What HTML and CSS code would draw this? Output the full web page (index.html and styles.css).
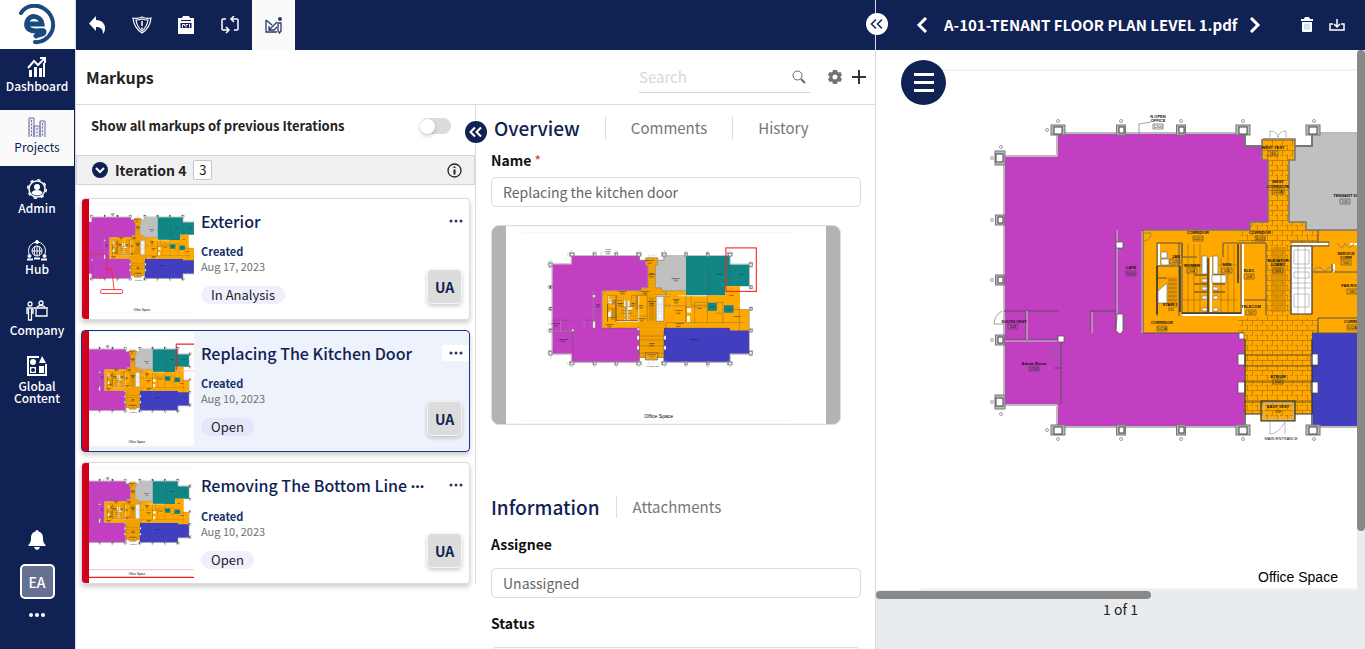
FILE: index.html
```html
<!DOCTYPE html>
<html lang="en">
<head>
<meta charset="utf-8">
<title>Markups</title>
<link rel="stylesheet" href="styles.css">
</head>
<body>
<svg class="defs" width="0" height="0" aria-hidden="true">
  <defs>
    <pattern id="tile" width="10" height="10" patternUnits="userSpaceOnUse">
      <path d="M0 .5H10M2.500.5V5M7.500 5V10" fill="none" stroke="#7a5000" stroke-width=".7" opacity=".6"/><path d="M0 5.500H10" fill="none" stroke="#7a5000" stroke-width=".6" stroke-dasharray="3 2" opacity=".6"/>
    </pattern>
    <g id="col"><rect x="-7" y="-5" width="14" height="10" fill="#bbb" stroke="#777"/><rect x="-4" y="-3" width="8" height="7" fill="#fff" stroke="#444"/></g>
    <g id="cols"><rect x="-4.500" y="-5" width="9" height="10" fill="#bbb" stroke="#777"/><rect x="-2" y="-3" width="5" height="6" fill="#fff" stroke="#444"/></g>
    <g id="dots" fill="none" stroke="#888" stroke-width=".8"><circle cx="1058" cy="121" r="1.500"/><circle cx="1121" cy="121" r="1.500"/><circle cx="1181" cy="121" r="1.500"/><circle cx="1243" cy="121" r="1.500"/><circle cx="1314" cy="121" r="1.500"/><circle cx="1373" cy="121" r="1.500"/><circle cx="1433" cy="121" r="1.500"/><circle cx="1494" cy="121" r="1.500"/></g>
    <g id="plan">
      <rect x="877" y="52" width="882" height="545" fill="#fff"/>
      <path d="M921 70H1663M921 589H1663" stroke="#e4e4e4" stroke-width="1"/>
      <path fill="#c13fc0" d="M1058 134H1245V146H1262V160H1268V222H1250V230H1143V333H1244V427H1058V404H1005V157H1058Z"/>
      <path fill="#c0c0c0" d="M1312 134H1373V230H1306V222H1289V160H1295V146H1312Z"/>
      <path fill="#108785" d="M1373 134H1494V158H1547V218H1481V243H1373Z"/>
      <path fill="#413fc0" d="M1312 333H1547V404H1494V427H1312Z"/>
      <path fill="#ffa800" d="M1262 139H1295V160H1289V222H1306V230H1373V243H1481V218H1522V282H1547V340H1494V333H1312V414H1295V421H1261V414H1244V333H1143V230H1250V222H1268V160H1262Z"/>
      <path fill="url(#tile)" d="M1262 139H1295V160H1289V222H1306V230H1318V243H1290V318H1318V333H1312V414H1295V421H1261V414H1244V333H1238V318H1266V243H1238V230H1250V222H1268V160H1262Z"/>
      <path fill="#108785" d="M1433 263H1458V285H1433ZM1478 270H1504V291H1478Z"/>
      <g fill="none" stroke="#777" stroke-width="2">
        <path d="M1004 157V404M1004 156H1057V133H1245V146H1262M1295 146H1312V133H1495V157H1548V218M1004 405H1057V427H1245V414M1312 414V427H1495V405H1548V283"/>
        <path stroke-width="1.500" d="M1263 139H1295V160H1289V222H1306V230H1373M1262 139V160H1268V222H1250V230H1143"/>
      </g>
      <path fill="none" stroke="#fff" stroke-width="1" d="M1004 157V404M1004 156H1057V133H1245M1312 133H1495V157H1548V218M1004 405H1057V427H1245M1312 427H1495V405H1548V283"/>
      <g fill="none" stroke="#555" stroke-width="1">
        <path d="M1116 230V330M1143 230V333H1244M1312 333H1494M1004 311H1059M1091 333V311H1116M1004 340H1062M1061 340V404M1026 311V340M1054 368H1062"/>
        <path stroke="#ccc" d="M1117 230V330M1142 231V333M1092 333V312M1027 311V340M1004 341H1062"/>
      </g>
      <path fill="#fff" stroke="#555" stroke-width=".8" d="M1117 314H1123V331L1120 334L1116 331ZM1116 242H1123V248H1116ZM1058 336H1064V342H1058Z"/>
      <g stroke="#555" fill="none" stroke-width="1">
        <path d="M1157 243V316M1157 243H1182V257H1197M1223 257V243H1241V314H1182V243M1157 266H1179V316M1157 278H1167M1179 243V266M1266 243V315M1242 243H1266M1242 300H1266"/>
        <path stroke="#333" stroke-width="1.500" d="M1180 266V312M1157 266V314M1208 258V313M1182 313H1241M1238 244V283"/>
        <path stroke="#fff" stroke-width="2" d="M1182 315H1243V244M1211 257V312M1159 244V265"/>
        <path stroke="#333" stroke-width="1" d="M1194 275H1207M1194 284H1207M1194 292H1207M1213 275H1225M1213 284H1225M1213 292H1225"/>
      </g>
      <path fill="#fff" stroke="#777" stroke-width=".7" d="M1202 256H1207V274H1202ZM1213 256H1218V274H1213ZM1161 252H1167V258H1161ZM1161 259H1169V265H1161ZM1158 291L1167 283V303H1158ZM1212 275H1226V283H1212ZM1202 279H1207V282H1202ZM1202 287H1207V290H1202ZM1202 296H1207V299H1202ZM1213 287H1218V290H1213ZM1213 296H1218V299H1213ZM1202 308H1207V311H1202ZM1213 308H1218V311H1213Z"/>
      <path fill="#c98500" opacity=".6" d="M1168 277H1177V308H1168ZM1271 247H1286V312H1271Z"/>
      <path d="M1168 280H1177M1168 284H1177M1168 288H1177M1168 292H1177M1168 296H1177M1168 300H1177" stroke="#866000" stroke-width=".6"/>
      <path fill="none" stroke="#a87400" stroke-width=".7" d="M1188 244V313M1194 244V313M1200 244V313M1221 258V313M1228 245V313M1234 245V313M1182 265H1202M1182 300H1202M1219 265H1238M1219 300H1238"/>
      <path fill="#fff" stroke="#333" stroke-width="1.200" d="M1291 246H1312V314H1291Z"/>
      <path fill="none" stroke="#999" stroke-width=".6" d="M1294 250H1309V264H1294ZM1294 272H1309V278H1294ZM1294 294H1309V307H1294ZM1291 268H1312M1291 283H1312M1291 288H1312M1298 246V314M1305 246V314"/>
      <path fill="none" stroke="#fff" stroke-width="2" d="M1292 244H1330M1334 264V272M1350 244H1432"/>
      <path fill="none" stroke="#555" stroke-width="1" d="M1290 242H1329V246H1313M1313 272H1332V264M1318 230V243M1335 272H1373V318H1318M1373 243V318M1373 275H1432M1387 243V270H1432M1432 243V318M1397 262V318M1397 262H1432M1378 318H1530M1455 262H1475V318M1475 282H1547M1520 282V340M1318 318V333M1455 292H1475M1434 158V243M1494 158V218M1433 188H1440V230"/>
      <path fill="#fff" d="M1376 278H1387V290H1376ZM1376 300H1384V316H1376Z"/>
      <path fill="none" stroke="#333" stroke-width=".7" d="M1244 355H1312M1244 366H1318M1244 382H1318M1244 402H1312"/>
      <path fill="#fff" stroke="#555" stroke-width=".8" d="M1238 354H1245V365H1238ZM1238 382H1245V393H1238ZM1311 354H1318V365H1311ZM1311 382H1318V393H1311ZM1239 333H1244V339H1239Z"/>
      <path fill="none" stroke="#333" stroke-width="1.200" d="M1245 339V414M1245 414H1261M1295 414H1312V339M1261 401H1295V421H1261Z"/>
      <path fill="none" stroke="#bbb" stroke-width="1" d="M1264 403H1293V419H1264ZM1270 422V434Q1278 434 1285 422V434M1270 131Q1278 131 1278 139Q1278 131 1286 131V139M1270 131V139"/>
      <path fill="none" stroke="#777" stroke-width=".7" d="M1002 311Q994 316 994 324H1004M1062 348H1052Q1052 356 1061 357M1123 317L1127 325L1123 332M1144 233H1151Q1151 240 1144 241M1139 142V124L1151 122M1313 272Q1318 262 1325 272Q1330 262 1335 272M1337 243Q1343 252 1345 243Q1350 252 1354 243"/>
      <g>
        <use href="#col" x="1058" y="130"/><use href="#cols" x="1121" y="130"/><use href="#cols" x="1181" y="130"/><use href="#col" x="1243" y="130"/><use href="#col" x="1313" y="130"/><use href="#cols" x="1373" y="130"/><use href="#cols" x="1433" y="130"/><use href="#col" x="1494" y="130"/>
        <use href="#col" x="1058" y="430"/><use href="#cols" x="1121" y="430"/><use href="#cols" x="1181" y="430"/><use href="#col" x="1243" y="430"/><use href="#col" x="1313" y="430"/><use href="#cols" x="1373" y="430"/><use href="#cols" x="1433" y="430"/><use href="#col" x="1494" y="430"/>
        <use href="#col" transform="translate(1000 158) rotate(90)"/><use href="#cols" x="1000" y="220"/><use href="#cols" x="1000" y="280"/><use href="#cols" x="1000" y="340"/><use href="#col" transform="translate(1000 402) rotate(90)"/>
        <use href="#col" transform="translate(1552 158) rotate(90)"/><use href="#cols" x="1552" y="220"/><use href="#cols" x="1552" y="280"/><use href="#cols" x="1552" y="340"/><use href="#col" transform="translate(1552 402) rotate(90)"/>
      </g>
      <use href="#dots"/><use href="#dots" y="318"/>
      <g fill="none" stroke="#888" stroke-width=".8"><circle cx="992" cy="158" r="1.500"/><circle cx="992" cy="220" r="1.500"/><circle cx="992" cy="280" r="1.500"/><circle cx="992" cy="340" r="1.500"/><circle cx="992" cy="402" r="1.500"/><circle cx="1001" cy="147" r="1.500"/><circle cx="1001" cy="414" r="1.500"/><circle cx="1047" cy="130" r="1.500"/><circle cx="1047" cy="430" r="1.500"/></g>
      <g class="room">
        <text x="1158" y="118">N OPEN</text><text x="1158" y="122">OFFICE</text><text x="1273" y="149">WEST VEST</text><text x="1278" y="183">WEST</text><text x="1278" y="188">CORRIDOR</text><text x="1345" y="197">TENNANT III</text><text x="1198" y="234">CORRIDOR</text><text x="1260" y="234">CORRIDOR</text><text x="1131" y="269">CAFE</text><text x="1176" y="258">JAN</text><text x="1192" y="267">WOMEN</text><text x="1227" y="266">MEN</text><text x="1249" y="272">ELEC</text><text x="1278" y="262">ELEVATOR</text><text x="1278" y="266">LOBBY</text><text x="1251" y="308">TELECOM</text><text x="1170" y="306">STAIR 1</text><text x="1162" y="324">CORRIDOR</text><text x="1346" y="255">SERVICE</text><text x="1346" y="259">CORR</text><text x="1352" y="287">FAN ROOM</text><text x="1355" y="323">CORRIDOR</text><text x="1278" y="378">ATRIUM</text><text x="1278" y="408">EAST VEST</text><text x="1014" y="323">SOUTH VEST</text><text x="1034" y="365">Admin Room</text><text class="light-label" x="1281" y="440">MAIN ENTRANCE</text><text x="1525" y="188">CAFE</text><text x="1465" y="188">OFFICE</text><text x="1396" y="367">TENNANT II</text><text x="1410" y="280">OPEN</text><text x="1446" y="276">MECH</text><text x="1491" y="282">JAN</text><text x="1498" y="245">CORR</text><text x="1513" y="302">SHIPPING</text>
      </g>
      <g class="room num">
        <text x="1158" y="128">1200</text><text x="1273" y="155">100</text><text x="1278" y="193">102A</text><text x="1345" y="203">120</text><text x="1198" y="240">102C</text><text x="1260" y="240">102D</text><text x="1131" y="275">1201</text><text x="1175" y="263">105</text><text x="1192" y="272">104</text><text x="1227" y="272">106</text><text x="1249" y="278">108</text><text x="1278" y="272">101</text><text x="1251" y="314">107</text><text x="1171" y="311">151</text><text x="1162" y="330">102A</text><text x="1346" y="264">160</text><text x="1352" y="293">180</text><text x="1352" y="329">102A</text><text x="1278" y="383">102</text><text x="1278" y="413">109</text><text x="1013" y="328">123</text><text x="1034" y="370">1203</text>
      </g>
      <path fill="none" stroke="#444" stroke-width=".6" d="M1153 124H1163V129H1153ZM1268 151H1278V156H1268ZM1272 189H1284V194H1272ZM1340 199H1350V204H1340ZM1193 236H1203V241H1193ZM1255 236H1265V241H1255ZM1126 271H1136V276H1126ZM1170 259H1180V264H1170ZM1187 268H1197V273H1187ZM1222 268H1232V273H1222ZM1244 274H1254V279H1244ZM1273 268H1283V273H1273ZM1246 310H1256V315H1246ZM1157 326H1167V331H1157ZM1341 260H1351V265H1341ZM1347 289H1357V294H1347ZM1347 325H1357V330H1347ZM1273 379H1283V384H1273ZM1008 324H1018V329H1008ZM1029 366H1039V371H1029Z"/>
      <text class="caption" x="1298" y="582">Office Space</text>
    </g>
    <g id="chev2" fill="none" stroke="currentColor"><path d="M9 5.500L4.500 10 9 14.500M15 5.500L10.500 10l4.500 4.500"/></g>
  </defs>
</svg>

<div class="app">
  <nav class="sidebar" aria-label="Main">
    <a class="logo" href="#" aria-label="Home"><svg width="38" height="42" viewBox="0 0 38 42"><g fill="none" stroke="#194a7d" stroke-linecap="round"><path stroke-width="4" d="M3 9C8 1 18 0 25 4c9 5 12 15 9 23-3 7-10 12-17 11"/><path stroke-width="5" d="M10 20H24C23 11 11 10 9 18c-2 7 4 9 9 9 5 0 8-1 8 1 0 3-4 2-8 4"/></g></svg></a>
    <a class="nav-item" href="#"><svg width="20" height="22" viewBox="0 0 20 22"><path fill="#fff" d="M2 14h3v7H2zM7 11h3v10H7zM12 12h3v9h-3zM16 7h2v14h-2z"/><path d="M1 12l6-7 4 4 6-6M13 2h5v5" fill="none" stroke="#fff" stroke-width="2"/></svg>Dashboard</a>
    <a class="nav-item active" href="#"><svg width="20" height="22" viewBox="0 0 20 22"><path fill="#e8ecf7" stroke="#6a72a0" d="M2 20V1h5v19M7 20V9h6v11M13 20V4h5v16"/><path stroke="#6a72a0" stroke-dasharray="2 1.500" d="M4.500 3v17M10 11v9M15.500 6v14"/><path stroke="#d77" stroke-dasharray="2 2" d="M2 4v16M13 5v15"/></svg>Projects</a>
    <a class="nav-item" href="#"><svg width="22" height="22" viewBox="0 0 22 22"><circle cx="11" cy="11" r="8" fill="none" stroke="#fff" stroke-width="1.500"/><circle cx="11" cy="11" r="9.300" fill="none" stroke="#fff" stroke-width="1.500" stroke-dasharray="3.300 4"/><circle cx="11" cy="9" r="3" fill="#fff"/><path fill="#fff" d="M5.500 15q1-3 5.500-3t5.500 3q-2 2.500-5.500 2.500T5.500 15"/></svg>Admin</a>
    <a class="nav-item" href="#"><svg width="22" height="22" viewBox="0 0 22 22" fill="none" stroke="#fff"><circle cx="11" cy="12" r="5"/><path d="M6 12h10M11 7v10M9 7.500q-2 4.500 0 9M13 7.500q2 4.500 0 9M3 15C1 8 6 3 11 3s10 5 8 12"/><circle cx="11" cy="3" r="1.500" fill="#fff"/><circle cx="3.500" cy="17" r="1.500" fill="#fff"/><circle cx="18.500" cy="17" r="1.500" fill="#fff"/><path stroke-width="2" d="M1 20.500h6M15 20.500h6M8 19.500h6"/></svg>Hub</a>
    <a class="nav-item" href="#"><svg width="24" height="22" viewBox="0 0 24 22"><g fill="none" stroke="#fff" stroke-width="1.300"><circle cx="5" cy="4" r="2"/><circle cx="16" cy="3" r="2"/><path d="M2 14V8h6v6M3.500 9v11h3V9M9 8h14M11 9v7h11V9M12 7q4-3 8 0"/></g></svg>Company</a>
    <a class="nav-item two-line" href="#"><svg width="20" height="22" viewBox="0 0 20 22"><path fill="none" stroke="#fff" stroke-width="2" d="M12 2H1v18h18V9"/><path fill="#fff" d="M15 1l4 7h-7zM12 11h5v7h-5zM3 12h6v6H3z"/><circle cx="6" cy="7" r="3" fill="#fff"/><circle cx="6" cy="15" r="2" fill="#102153"/></svg>Global Content</a>
    <div class="side-foot">
      <button class="plain" aria-label="Notifications"><svg width="18" height="20" viewBox="0 0 18 20"><path fill="#fff" d="M9 0c1 0 1.500 1 1.500 1.500C14 2.500 15 5 15 8c0 4 1 5 2.500 7v1H.5v-1C2 13 3 12 3 8c0-3 1-5.500 4.500-6.500C7.500 1 8 0 9 0M6 17h6q-1 3-3 3t-3-3"/></svg></button>
      <button class="user">EA</button>
      <button class="plain" aria-label="More"><svg width="16" height="4" viewBox="0 0 16 4" fill="#fff"><circle cx="2" cy="2" r="2"/><circle cx="8" cy="2" r="2"/><circle cx="14" cy="2" r="2"/></svg></button>
    </div>
  </nav>

  <main class="main">
    <div class="toolbar">
      <button aria-label="Back"><svg width="18" height="18" viewBox="0 0 18 18"><path fill="#fff" d="M7 0v4c6 0 9 4 9 8 0 3-1 5-2 6 0-5-2-7-7-7v4L0 7.500z"/></svg></button>
      <button aria-label="Issues"><svg width="20" height="18" viewBox="0 0 20 18"><path fill="none" stroke="#fff" stroke-width="1.200" d="M1 2q5 1 9-1 4 2 9 1-1 10-9 15Q2 12 1 2zM4 4q4 0 6-1 2 1 6 1-1 7-6 11Q5 11 4 4z"/><path stroke="#fff" stroke-width="1.500" d="M10 5v5M10 11.500v2"/></svg></button>
      <button aria-label="RFI"><svg width="18" height="18" viewBox="0 0 18 18"><path fill="#fff" d="M1 2h4l1-2h6l1 2h4v16H1z"/><path d="M4 4.500h10" stroke="#102153"/><path fill="#102153" d="M3.500 7h11v5h-11z"/><path stroke="#fff" d="M5.500 11.500V8.500h2V10M9 11.500v-3h2M12.500 8v3.500" fill="none"/></svg></button>
      <button aria-label="Iterations"><svg width="20" height="18" viewBox="0 0 20 18" fill="none" stroke="#fff" stroke-width="1.500"><path d="M6 3H3q-1 0-1 1v9q0 1 1 1h5M6 11l3 3-3 3M14 14h3q1 0 1-1V4q0-1-1-1h-5M14 0l-3 3 3 3"/></svg></button>
      <button class="on" aria-label="Markups"><svg width="18" height="18" viewBox="0 0 18 18"><path fill="none" stroke="#2a3866" stroke-width="1.300" d="M1 4v12h11M1 4l6 5M4 14l8-8M4 10v4h5l3-3"/><path fill="none" stroke="#2a3866" stroke-width="1.300" d="M13 7h3v8l-1.500 2L13 15z"/><circle cx="15" cy="3" r="2" fill="#2a3866"/></svg></button>
    </div>

    <header class="title-row">
      <h1>Markups</h1>
      <label class="search"><input type="search" placeholder="Search" aria-label="Search"><svg width="14" height="14" viewBox="0 0 14 14" fill="none" stroke="#666"><circle cx="5.500" cy="5.500" r="4.500"/><path stroke-width="2" d="M9 9l4 4"/></svg></label>
      <button class="plain" aria-label="Settings"><svg width="14" height="14" viewBox="0 0 14 14"><path fill="#737373" fill-rule="evenodd" d="M5 0h4l.5 2 1 .6 2-.6 1.500 3-1.500 1.500v1L14 9l-1.500 3-2-.6-1 .6L9 14H5l-.5-2-1-.6-2 .6L0 9l1.500-1.500v-1L0 5l1.500-3 2 .6 1-.6zM7 4.500a2.500 2.500 0 100 5 2.500 2.500 0 000-5"/></svg></button>
      <button class="plain" aria-label="Add"><svg width="14" height="14" viewBox="0 0 14 14"><path stroke="#333" stroke-width="2" d="M7 0v14M0 7h14"/></svg></button>
    </header>

    <div class="columns">
      <section class="list">
        <label class="previous">Show all markups of previous Iterations<input type="checkbox" class="switch"></label>
        <div class="iteration">
          <button class="plain" aria-label="Collapse iteration"><svg width="16" height="16" viewBox="0 0 16 16"><circle cx="8" cy="8" r="8" fill="#102153"/><path d="M4 6l4 4 4-4" fill="none" stroke="#fff" stroke-width="2"/></svg></button>
          <h2>Iteration 4</h2><span class="count">3</span>
          <button class="plain info" aria-label="Iteration info"><svg width="15" height="15" viewBox="0 0 15 15"><circle cx="7.500" cy="7.500" r="6.500" fill="none" stroke="#222" stroke-width="1.300"/><path stroke="#222" stroke-width="2" d="M7.500 3.500v1.500M7.500 6.500v5"/></svg></button>
        </div>
        <div class="cards">
          <article class="card">
            <svg class="thumb" viewBox="1045 52 502 545" role="img" aria-label="Floor plan"><use href="#plan"/><g fill="none" stroke="#f22" stroke-width="4"><path stroke-dasharray="12 4" d="M1047 316q10-10 20 0 10-10 20 0 10-10 20 0 10-10 20 0 12 10 0 22 12 10 0 22 12 10 0 22 12 10 0 22 12 10 0 18-10 12-20 0-10 12-20 0-10 12-20 0-10 12-20 0"/><path d="M1129 381h24l12 100"/><rect x="1100" y="480" width="106" height="19" rx="8"/></g></svg>
            <div class="card-text"><h3>Exterior</h3><b>Created</b><time>Aug 17, 2023</time><span class="pill">In Analysis</span></div>
            <div class="card-side"><button class="plain more" aria-label="More"><svg width="14" height="4" viewBox="0 0 14 4" fill="#2d3a5c"><circle cx="2" cy="2" r="1.500"/><circle cx="7" cy="2" r="1.500"/><circle cx="12" cy="2" r="1.500"/></svg></button><span class="who">UA</span></div>
          </article>
          <article class="card selected">
            <svg class="thumb" viewBox="1069 52 502 545" role="img" aria-label="Floor plan"><use href="#plan"/><path d="M1600 110H1486V236" fill="none" stroke="#e22" stroke-width="5"/><path d="M1486 238H1600" stroke="#fbb" stroke-width="4"/></svg>
            <div class="card-text"><h3>Replacing The Kitchen Door</h3><b>Created</b><time>Aug 10, 2023</time><span class="pill">Open</span></div>
            <div class="card-side"><button class="plain more" aria-label="More"><svg width="14" height="4" viewBox="0 0 14 4" fill="#2d3a5c"><circle cx="2" cy="2" r="1.500"/><circle cx="7" cy="2" r="1.500"/><circle cx="12" cy="2" r="1.500"/></svg></button><span class="who">UA</span></div>
          </article>
          <article class="card">
            <svg class="thumb" viewBox="1069 52 502 545" role="img" aria-label="Floor plan"><use href="#plan"/><path d="M1060 558H1600" stroke="#fbb" stroke-width="5"/><path d="M1060 594H1600" stroke="#e22" stroke-width="5"/></svg>
            <div class="card-text"><h3>Removing The Bottom Line <span class="cut">···</span></h3><b>Created</b><time>Aug 10, 2023</time><span class="pill">Open</span></div>
            <div class="card-side"><button class="plain more" aria-label="More"><svg width="14" height="4" viewBox="0 0 14 4" fill="#2d3a5c"><circle cx="2" cy="2" r="1.500"/><circle cx="7" cy="2" r="1.500"/><circle cx="12" cy="2" r="1.500"/></svg></button><span class="who">UA</span></div>
          </article>
        </div>
      </section>

      <section class="details">
        <button class="fold" aria-label="Collapse list"><svg width="20" height="20" viewBox="0 0 20 20"><use href="#chev2"/></svg></button>
        <div class="tabs"><button class="tab current">Overview</button><button class="tab">Comments</button><button class="tab">History</button></div>
        <label class="field-label" for="name">Name <i>*</i></label>
        <input class="field" id="name" value="Replacing the kitchen door">
        <div class="preview"><svg viewBox="877 52 882 545" role="img" aria-label="Floor plan preview"><use href="#plan"/><rect x="1483" y="112" width="84" height="120" fill="none" stroke="#f22" stroke-width="3"/></svg></div>
        <div class="tabs lower"><button class="tab current">Information</button><button class="tab">Attachments</button></div>
        <label class="field-label" for="assignee">Assignee</label>
        <select class="field" id="assignee"><option>Unassigned</option></select>
        <label class="field-label" for="status">Status</label>
        <select class="field" id="status"><option>Open</option></select>
      </section>
    </div>
  </main>

  <section class="viewer">
    <button class="fold light" aria-label="Collapse panel"><svg width="20" height="20" viewBox="0 0 20 20"><use href="#chev2"/></svg></button>
    <header class="viewer-head">
      <button class="plain" aria-label="Previous"><svg width="12" height="16" viewBox="0 0 12 16"><path d="M10 1L3 8l7 7" fill="none" stroke="#fff" stroke-width="3"/></svg></button>
      <h2>A-101-TENANT FLOOR PLAN LEVEL 1.pdf</h2>
      <button class="plain" aria-label="Next"><svg width="12" height="16" viewBox="0 0 12 16"><path d="M2 1l7 7-7 7" fill="none" stroke="#fff" stroke-width="3"/></svg></button>
      <span class="viewer-actions">
        <button class="plain" aria-label="Delete"><svg width="14" height="16" viewBox="0 0 14 16"><path fill="#fff" d="M1 2h3l1-2h4l1 2h3v2H1zM2 5h10v9q0 1-1 1H3q-1 0-1-1z"/><path stroke="#9cc4e4" d="M5 6.500v6M7 6.500v6M9 6.500v6"/></svg></button>
        <button class="plain" aria-label="Download"><svg width="16" height="13" viewBox="0 0 16 13" fill="none" stroke="#fff" stroke-width="1.500"><path d="M4 5H1v6h14V5h-3M8 0v8M5 5l3 3 3-3"/></svg></button>
      </span>
    </header>
    <div class="stage">
      <button class="menu" aria-label="Tools"><span></span><span></span><span></span></button>
      <div class="sheet"><svg width="882" height="540" viewBox="876 50 882 540" role="img" aria-label="Tenant floor plan level 1"><use href="#plan"/></svg></div>
      <div class="vtrack"><div class="vthumb"></div></div>
    </div>
    <div class="hthumb"></div>
    <p class="pages">1 of 1</p>
  </section>
</div>
</body>
</html>
```
FILE: styles.css
```css
* { box-sizing: border-box; }
body {
  margin: 0;
  font-family: "Noto Sans CJK SC", "Noto Sans", sans-serif;
  font-size: 14px;
  line-height: 20px;
  color: #222;
  background: #fff;
}
h1, h2, h3, p { margin: 0; }
a { color: inherit; text-decoration: none; }
button, input, select { font: inherit; color: inherit; }
button { padding: 0; border: 0; background: none; }
svg { display: block; flex: none; }
.defs { position: absolute; }
.room { font: bold 4px "Liberation Sans", sans-serif; text-anchor: middle; fill: #111; }
.num, .light-label { font-weight: normal; }
.caption { font: 14px "Liberation Sans", sans-serif; text-anchor: middle; fill: #000; }
.plain { display: flex; align-items: center; justify-content: center; }

.app {
  display: grid;
  grid-template-columns: 76px minmax(0, 800fr) minmax(0, 489fr);
  height: 100vh;
  overflow: hidden;
}

.sidebar {
  display: flex;
  flex-direction: column;
  padding-right: 1px;
  background: #102153;
  color: #fff;
  border-right: 1px solid #d8dae2;
}
.logo {
  display: flex;
  align-items: center;
  justify-content: center;
  height: 49px;
  margin-right: -1px;
  padding-right: 2px;
  background: #fff;
}
.nav-item {
  display: flex;
  flex-direction: column;
  align-items: center;
  height: 56px;
  margin-bottom: 5px;
  padding-top: 7px;
  font-size: 12px;
  line-height: 16px;
  font-weight: 500;
  text-align: center;
}
.nav-item.active { background: #fafafa; color: #102153; font-weight: 400; }
.nav-item.two-line { width: 56px; height: 64px; margin: 0 auto; padding-top: 1px; line-height: 12px; }
.two-line svg { margin-bottom: 3px; }
.side-foot {
  display: flex;
  flex-direction: column;
  align-items: center;
  gap: 14px;
  margin-top: auto;
  padding-bottom: 32px;
}
.user {
  width: 35px;
  height: 35px;
  border: 2px solid #fff;
  border-radius: 5px;
  background: #667090;
  font-size: 14px;
  line-height: 28px;
  font-weight: 500;
}

.main { display: flex; flex-direction: column; min-height: 0; }
.toolbar { display: flex; flex: none; height: 50px; background: #102153; }
.toolbar button { display: flex; align-items: center; justify-content: center; width: 44px; }
.toolbar .on { width: 43px; background: #fafafa; }
.title-row {
  display: flex;
  flex: none;
  align-items: center;
  height: 55px;
  padding: 0 10px;
  border-bottom: 1px solid #dcdcdc;
}
.title-row h1 { margin-right: auto; font-size: 16px; font-weight: 700; }
.search {
  display: flex;
  align-items: center;
  width: 171px;
  height: 31px;
  margin-right: 18px;
  padding-right: 4px;
  border-bottom: 1px solid #d4d4d4;
}
.search input { flex: 1; min-width: 0; padding: 0; border: 0; outline: 0; background: none; font-size: 15px; }
.search input::placeholder { color: #d8d8d8; }
.title-row .plain + .plain { margin-left: 10px; }

.columns {
  display: grid;
  grid-template-columns: minmax(0, 1fr) minmax(0, 1fr);
  flex: 1;
  min-height: 0;
}
.list { align-self: start; border-right: 1px solid #dcdcdc; }
.previous {
  display: flex;
  align-items: center;
  justify-content: space-between;
  height: 50px;
  padding: 0 24px 8px 15px;
  font-size: 13px;
  font-weight: 700;
}
.switch {
  appearance: none;
  display: flex;
  align-items: center;
  width: 31px;
  height: 16px;
  margin: 0;
  border-radius: 8px;
  background: #dcdcdc;
}
.switch::before {
  content: "";
  width: 15px;
  height: 15px;
  border-radius: 50%;
  background: #fff;
  box-shadow: 0 2px 4px #0003;
}
.iteration {
  display: flex;
  align-items: center;
  gap: 7px;
  height: 30px;
  padding: 0 12px 0 15px;
  border: 1px solid #d4d4d4;
  background: #f0f0f0;
}
.iteration h2 { font-size: 14px; font-weight: 700; }
.count {
  width: 19px;
  border: 1px solid #c4c4c4;
  border-radius: 2px;
  background: #fff;
  text-align: center;
  line-height: 18px;
  font-size: 13px;
}
.info { margin-left: auto; }
.cards { display: grid; gap: 10px; padding: 13px 5px 0; }
.card {
  display: flex;
  min-width: 0;
  height: 122px;
  border: 1px solid #dcdcdc;
  border-radius: 4px;
  background: linear-gradient(90deg, #d0021b 7px, #fff 7px);
  box-shadow: 0 3px 5px #0003;
}
.card.selected { border-color: #173a78; background: linear-gradient(90deg, #d0021b 7px, #edf2fb 7px); }
.thumb { width: 105px; height: 114px; margin: 1px 0 0 7px; }
.card-text { display: flex; flex: 1; flex-direction: column; align-items: start; min-width: 0; padding: 12px 0 0 7px; }
.card-text h3 { margin-bottom: 13px; font-size: 16px; font-weight: 500; color: #102153; white-space: nowrap; }
.cut { font-family: "Noto Sans", sans-serif; font-weight: 700; }
.card-text b { font-size: 11px; line-height: 15px; font-weight: 700; color: #173068; }
.card-text time { font-size: 11px; line-height: 15px; color: #707070; }
.pill {
  margin-top: 12px;
  padding: 0 10px;
  border-radius: 9px;
  background: #f0effd;
  font-size: 13px;
  line-height: 18px;
}
.selected .pill { background: #e4e7fa; }
.card-side {
  display: flex;
  flex-direction: column;
  align-items: end;
  justify-content: space-between;
  width: 42px;
  padding: 14px 0 15px;
}
.more { width: 27px; height: 16px; border-radius: 2px; }
.selected .more { background: #fff; }
.who {
  width: 35px;
  height: 35px;
  margin-right: 7px;
  border: 1px solid #f5f5f5;
  border-radius: 5px;
  background: #dcdcdc;
  box-shadow: 0 2px 4px #0003;
  text-align: center;
  line-height: 34px;
  font-weight: 700;
  color: #102153;
}

.details { position: relative; display: flex; flex-direction: column; align-items: stretch; padding: 11px 15px 0; min-height: 0; min-width: 0; }
.fold {
  position: absolute;
  left: -11px;
  top: 16px;
  z-index: 2;
  display: flex;
  align-items: center;
  justify-content: center;
  width: 22px;
  height: 22px;
  border-radius: 50%;
  background: #102153;
  color: #fff;
}
.fold svg { stroke-width: 2; }
.fold.light { left: -10px; top: 13px; background: #fff; color: #102153; }
.light svg { stroke-width: 1.500; }
.tabs { display: flex; align-items: center; flex: none; height: 24px; margin-bottom: 9px; }
.tab { padding: 0 25px; border-left: 1px solid #dcdcdc; font-size: 15px; line-height: 22px; color: #777; }
.tab.current { padding-left: 3px; border: 0; font-size: 19px; font-weight: 500; color: #102153; }
.lower { margin: 70px 0 14px; }
.lower .tab { padding: 0 16px; }
.lower .tab.current { padding-left: 0; }
.field-label { flex: none; height: 22px; font-weight: 700; line-height: 22px; color: #111; }
.field-label i { font-style: normal; font-weight: 400; color: #d33; }
.field {
  appearance: none;
  flex: none;
  width: 100%;
  height: 30px;
  margin: 6px 0 18px;
  padding: 0 11px;
  border: 1px solid #dcdcdc;
  border-radius: 5px;
  background: #fff;
  color: #666;
}
select.field { margin: 13px 0 14px; }
.preview {
  flex: none;
  width: 350px;
  max-width: 100%;
  border: 1px solid #dcdcdc;
  border-radius: 8px;
  background: #b3b3b3;
  overflow: hidden;
}
.preview svg { width: 320px; height: 198px; margin: 0 auto; }

.viewer {
  position: relative;
  display: flex;
  flex-direction: column;
  min-width: 0;
  background: #e9ecef;
  box-shadow: -1px 0 #d8dae2;
}
.viewer-head { display: flex; flex: none; align-items: center; height: 50px; padding: 0 20px 0 40px; background: #102153; color: #fff; }
.viewer-head h2 { margin: 0 12px 0 16px; font-size: 15px; font-weight: 700; white-space: nowrap; }
.viewer-actions { display: flex; gap: 15px; margin-left: auto; }
.stage { position: relative; display: flex; flex: none; height: 540px; }
.sheet { flex: 1; min-width: 0; overflow: hidden; background: #fff; }
.menu {
  position: absolute;
  left: 25px;
  top: 10px;
  display: grid;
  place-content: center;
  gap: 5px;
  width: 45px;
  height: 45px;
  border-radius: 50%;
  background: #102153;
}
.menu span { width: 20px; height: 3px; background: #fff; }
.vtrack { width: 8px; background: #e9ecef; }
.vthumb { height: 481px; border-radius: 4px; background: #888; }
.hthumb { width: 275px; height: 8px; margin-top: 1px; border-radius: 4px; background: #888; }
.pages { text-align: center; }
```
